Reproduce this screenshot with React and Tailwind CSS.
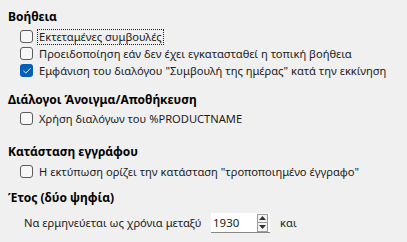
import { Check } from "lucide-react";

function Box({ checked }) {
  if (checked) {
    return (
      <span className="flex h-[13px] w-[13px] shrink-0 items-center justify-center rounded-[3px] bg-[#005fb8]">
        <Check size={10} strokeWidth={2.2} className="text-white" />
      </span>
    );
  }
  return (
    <span className="h-[13px] w-[13px] shrink-0 rounded-[3px] border border-[#5c5c5c] bg-[#f7f7f7]" />
  );
}

function Option({ label, checked = false, focused = false }) {
  return (
    <div className="flex h-[17px] items-center gap-[4px] whitespace-nowrap pl-[12px]">
      <Box checked={checked} />
      <span
        className={
          focused
            ? "border border-dotted border-[#222] px-px leading-[14px]"
            : "px-[2px] leading-[14px]"
        }
      >
        {label}
      </span>
    </div>
  );
}

function Heading({ children, className = "" }) {
  return (
    <div className={"h-4 whitespace-nowrap text-[12px] font-bold leading-4 text-black " + className}>
      {children}
    </div>
  );
}

export default function App() {
  return (
    <div className="h-[242px] w-[407px] overflow-hidden bg-[#f0f0f0] pl-2 pt-[9px] font-['Noto_Sans',sans-serif] text-[11.15px] text-[#1b1b1b]">
      <Heading>Βοήθεια</Heading>
      <div className="mt-[3px]">
        <Option label="Εκτεταμένες συμβουλές" focused />
        <Option label="Προειδοποίηση εάν δεν έχει εγκατασταθεί η τοπική βοήθεια" />
        <Option label={'Εμφάνιση του διαλόγου "Συμβουλή της ημέρας" κατά την εκκίνηση'} checked />
      </div>

      <Heading className="mt-[13px]">Διάλογοι Άνοιγμα/Αποθήκευση</Heading>
      <div className="mt-[2px]">
        <Option label="Χρήση διαλόγων του %PRODUCTNAME" />
      </div>

      <Heading className="mt-[17px]">Κατάσταση εγγράφου</Heading>
      <div className="mt-[3px]">
        <Option label={'Η εκτύπωση ορίζει την κατάσταση "τροποποιημένο έγγραφο"'} />
      </div>

      <Heading className="mt-[10px]">Έτος (δύο ψηφία)</Heading>
      <div className="mt-[7px] flex items-center whitespace-nowrap pl-[16px]">
        <span className="w-[187px]">Να ερμηνεύεται ως χρόνια μεταξύ</span>
        <div className="flex h-[20px] w-[59px] items-center justify-between border-b border-[#868686] bg-white pl-[2px] pr-[2px]">
          <span className="text-[11.5px]">1930</span>
          <div className="flex flex-col">
            <span className="flex h-[9px] w-[11px] items-center justify-center border border-[#9a9a9a] bg-[#f4f4f4]">
              <svg width="7" height="4" viewBox="0 0 7 4"><path d="M0 4 L3.5 0 L7 4 Z" fill="#333" /></svg>
            </span>
            <span className="flex h-[9px] w-[11px] items-center justify-center border border-t-0 border-[#9a9a9a] bg-[#f4f4f4]">
              <svg width="7" height="4" viewBox="0 0 7 4"><path d="M0 0 L3.5 4 L7 0 Z" fill="#333" /></svg>
            </span>
          </div>
        </div>
        <span className="ml-[10px]">και</span>
      </div>
    </div>
  );
}
